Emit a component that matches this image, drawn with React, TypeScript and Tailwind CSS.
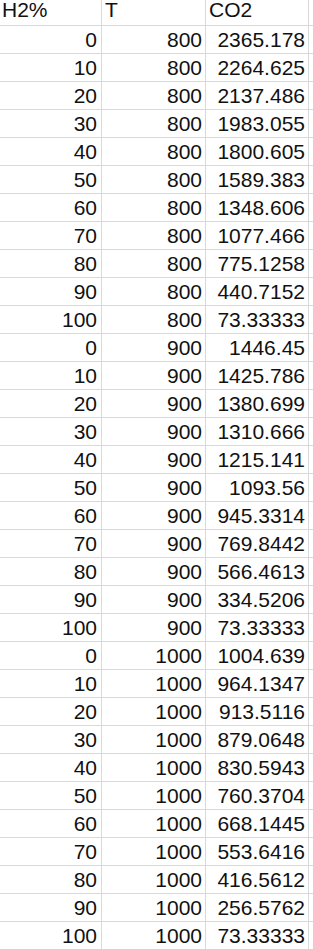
import React from 'react';

const co2: Record<number, string[]> = {
  800: ['2365.178', '2264.625', '2137.486', '1983.055', '1800.605', '1589.383', '1348.606', '1077.466', '775.1258', '440.7152', '73.33333'],
  900: ['1446.45', '1425.786', '1380.699', '1310.666', '1215.141', '1093.56', '945.3314', '769.8442', '566.4613', '334.5206', '73.33333'],
  1000: ['1004.639', '964.1347', '913.5116', '879.0648', '830.5943', '760.3704', '668.1445', '553.6416', '416.5612', '256.5762', '73.33333'],
};

const rows = [800, 900, 1000].flatMap((t) =>
  co2[t].map((v, i) => ({ h2: i * 10, t, v }))
);

const cell = 'border-r border-b border-[#d9d9d9] whitespace-nowrap';

export default function App() {
  return (
    <div
      className="w-[313px] h-[949px] overflow-hidden bg-white text-[#111] text-[21px]"
      style={{ fontFamily: '"Liberation Sans", Arial, sans-serif' }}
    >
      <div className="flex h-[26px] leading-[24px]">
        <div className={`${cell} w-[102px] pl-[2px]`}><div className="-mt-[2px]">H2%</div></div>
        <div className={`${cell} w-[104px] pl-[3px]`}><div className="-mt-[2px]">T</div></div>
        <div className={`${cell} w-[103px] pl-[3px]`}><div className="-mt-[2px]">CO2</div></div>
        <div className="flex-1 border-b border-[#d9d9d9]" />
      </div>
      {rows.map((r, i) => (
        <div key={i} className="flex h-[28px] leading-[27px]">
          <div className={`${cell} w-[102px] pr-[4px] text-right`}>{r.h2}</div>
          <div className={`${cell} w-[104px] pr-[3px] text-right`}>{r.t}</div>
          <div className={`${cell} w-[103px] pr-[3px] text-right`}>{r.v}</div>
          <div className="flex-1 border-b border-[#d9d9d9]" />
        </div>
      ))}
    </div>
  );
}
